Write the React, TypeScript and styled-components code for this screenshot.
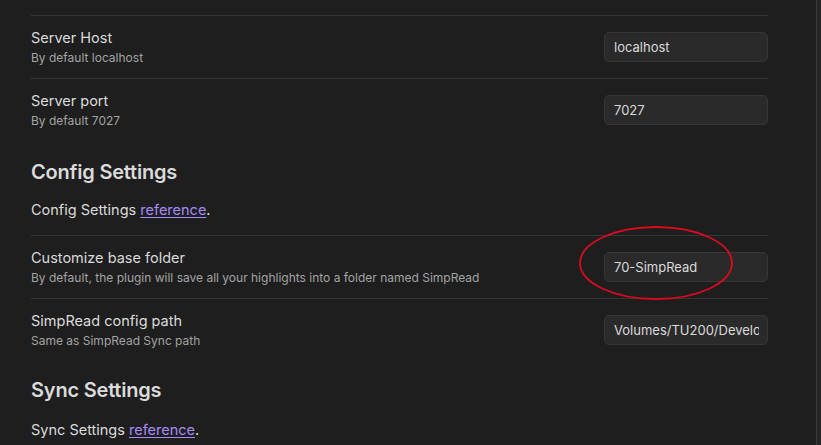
import styled, { createGlobalStyle } from 'styled-components'

const GlobalStyle = createGlobalStyle`
  html, body {
    margin: 0;
    padding: 0;
    height: 100%;
    background: #1e1e1e;
    overflow: hidden;
  }

  body {
    font-family: Inter, 'Noto Sans', 'Liberation Sans', sans-serif;
    color: #dadada;
    -webkit-font-smoothing: antialiased;
  }
`

type Setting = {
  name: string
  desc: string
  value: string
  marked?: boolean
}

const serverSettings: Setting[] = [
  { name: 'Server Host', desc: 'By default localhost', value: 'localhost' },
  { name: 'Server port', desc: 'By default 7027', value: '7027' },
]

const configSettings: Setting[] = [
  {
    name: 'Customize base folder',
    desc: 'By default, the plugin will save all your highlights into a folder named SimpRead',
    value: '70-SimpRead',
    marked: true,
  },
  { name: 'SimpRead config path', desc: 'Same as SimpRead Sync path', value: 'Volumes/TU200/Develop' },
]

function SettingRow({ name, desc, value, marked }: Setting) {
  return (
    <Row>
      <Info>
        <Name>{name}</Name>
        <Desc>{desc}</Desc>
      </Info>
      <Control>
        <TextInput type="text" defaultValue={value} spellCheck={false} />
        {marked && (
          <Mark width="156" height="78" viewBox="0 0 156 78">
            <ellipse cx="78" cy="38" rx="76" ry="36" fill="none" stroke="#dc0a1e" strokeWidth="1.8" />
          </Mark>
        )}
      </Control>
    </Row>
  )
}

export default function App() {
  return (
    <>
      <GlobalStyle />
      <Window>
        <Pane>
          {serverSettings.map((s) => (
            <SettingRow key={s.name} {...s} />
          ))}

          <Heading>Config Settings</Heading>
          <Note>
            Config Settings <Link href="#">reference</Link>.
          </Note>
          {configSettings.map((s) => (
            <SettingRow key={s.name} {...s} />
          ))}

          <Heading $gap={17}>Sync Settings</Heading>
          <Note $gap={18}>
            Sync Settings <Link href="#">reference</Link>.
          </Note>
        </Pane>
        <Gutter />
      </Window>
    </>
  )
}

const Window = styled.div`
  display: flex;
  height: 445px;
  overflow: hidden;
`

const Pane = styled.div`
  flex: 1;
  display: flex;
  flex-direction: column;
  padding: 15px 48px 0 31px;
  min-width: 0;
`

const Gutter = styled.div`
  width: 4px;
  border-left: 1px solid #3c3c3c;
  background: #262626;
`

const Row = styled.div`
  display: flex;
  align-items: center;
  justify-content: space-between;
  gap: 24px;
  height: 62px;
  border-top: 1px solid #363636;
  flex-shrink: 0;
`

const Info = styled.div`
  display: flex;
  flex-direction: column;
  min-width: 0;
`

const Name = styled.div`
  font-size: 14.5px;
  line-height: 22px;
  color: #dadada;
`

const Desc = styled.div`
  font-size: 12px;
  line-height: 18px;
  color: #a3a3a3;
  white-space: nowrap;
`

const Control = styled.div`
  position: relative;
  flex-shrink: 0;
`

const TextInput = styled.input`
  box-sizing: border-box;
  width: 164px;
  height: 30px;
  padding: 0 8px 0 9px;
  border: 1px solid #363636;
  border-radius: 5px;
  background: #2a2a2a;
  color: #dadada;
  font-family: inherit;
  font-size: 13px;
  outline: none;
`

const Mark = styled.svg`
  position: absolute;
  left: -26px;
  top: -27px;
  pointer-events: none;
`

const Heading = styled.h2<{ $gap?: number }>`
  margin: ${(p) => p.$gap ?? 19}px 0 0;
  font-size: 20px;
  line-height: 24px;
  font-weight: 600;
  color: #dadada;
  letter-spacing: -0.2px;
`

const Note = styled.p<{ $gap?: number }>`
  margin: ${(p) => p.$gap ?? 16}px 0 15px;
  font-size: 14.5px;
  line-height: 20px;
  color: #dadada;
`

const Link = styled.a`
  color: #a68af9;
  text-decoration: underline;
  text-underline-offset: 2px;
`
